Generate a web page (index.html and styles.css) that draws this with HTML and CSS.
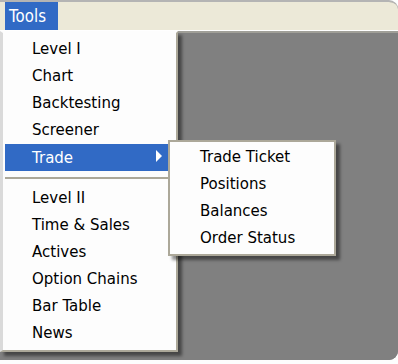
FILE: index.html
```html
<!DOCTYPE html>
<html lang="en">
<head>
    <meta charset="UTF-8">
    <title>Tools Menu</title>
    <link rel="stylesheet" href="styles.css">
</head>
<body>
    <div class="window">
        <div class="menubar">
            <span class="menu-title open"><span class="menu-label">Tools</span></span>
        </div>
        <div class="client"></div>

        <div class="dropdown">
            <div class="item">Level I</div>
            <div class="item">Chart</div>
            <div class="item">Backtesting</div>
            <div class="item">Screener</div>
            <div class="item has-sub active">
                <span>Trade</span>
                <svg class="arrow" width="6" height="12" viewBox="0 0 6 12">
                    <polygon points="0,0 6,6 0,12" fill="#fff"/>
                </svg>
                <div class="submenu">
                    <div class="item">Trade Ticket</div>
                    <div class="item">Positions</div>
                    <div class="item">Balances</div>
                    <div class="item">Order Status</div>
                </div>
            </div>
            <div class="separator"></div>
            <div class="item">Level II</div>
            <div class="item">Time &amp; Sales</div>
            <div class="item">Actives</div>
            <div class="item">Option Chains</div>
            <div class="item">Bar Table</div>
            <div class="item">News</div>
        </div>
    </div>
</body>
</html>
```

FILE: styles.css
```css
body {
    margin: 0;
    padding: 0;
    background: #fdfdfd;
    font-family: "DejaVu Sans", Verdana, sans-serif;
    font-size: 15px;
}

.window {
    position: relative;
    width: 398px;
    border-top: 2px solid #b4b4b4;
    border-top-right-radius: 9px;
    border-bottom-right-radius: 9px;
    overflow: hidden;
    background: #808080;
}

.menubar {
    display: flex;
    height: 28px;
    padding-left: 5px;
    background: #ece9d8;
    border-bottom: 1px solid #ffffff;
}

.menu-title {
    display: flex;
    align-items: center;
    padding: 0 12px 0 4px;
    color: #000;
}

.menu-label {
    display: inline-block;
    transform: scaleY(1.2);
}

.menu-title.open {
    background: #316ac5;
    color: #fff;
}

.client {
    height: 327px;
    border-top: 2px solid #a09f98;
    background: #808080;
}

/* drop-down menus */
.dropdown {
    position: absolute;
    top: 29px;
    left: 0;
    width: 178px;
    box-sizing: border-box;
    padding: 3px 2px 3px 2px;
    background: #fdfdfd;
    border: 2px solid #aca899;
    border-top-color: #fdfdfd;
    border-left: 3px solid #dadada;
    box-shadow: 4px 4px 3px rgba(0, 0, 0, 0.45);
}

.item {
    height: 27px;
    line-height: 26px;
    padding-left: 27px;
    color: #000;
    white-space: nowrap;
}

.item.has-sub {
    position: relative;
    display: flex;
    align-items: center;
    justify-content: space-between;
    padding-right: 12px;
}

.item.active {
    background: #316ac5;
    color: #fff;
}

.arrow {
    margin-top: -3px;
}

.separator {
    height: 14px;
    box-sizing: border-box;
    border-top: 6px solid transparent;
    background: linear-gradient(#aca899 0, #aca899 2px, #fdfdfd 2px);
}

.submenu {
    position: absolute;
    top: -4px;
    left: 163px;
    width: 168px;
    box-sizing: border-box;
    padding: 2px;
    background: #fdfdfd;
    border: 2px solid #aca899;
    box-shadow: 4px 4px 3px rgba(0, 0, 0, 0.45);
}

.submenu .item {
    padding-left: 28px;
    color: #000;
    line-height: 26px;
}
```
